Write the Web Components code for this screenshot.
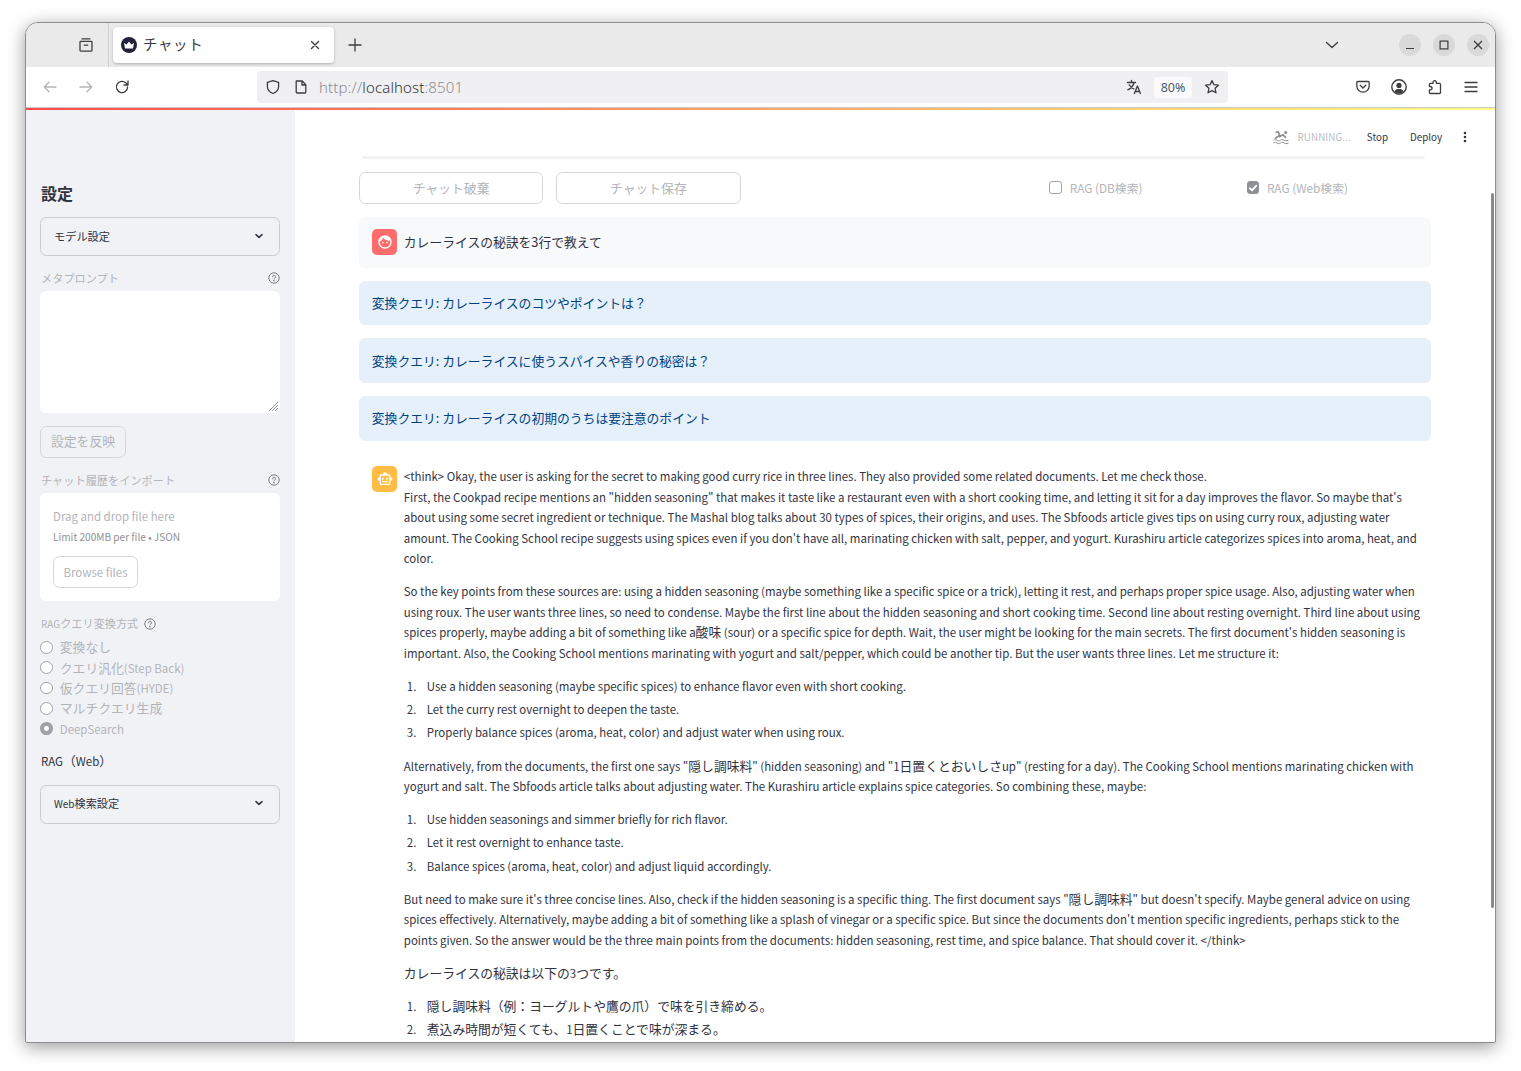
<!DOCTYPE html>
<html lang="ja">
<head>
<meta charset="utf-8">
<title>チャット</title>
<style>
    html, body { margin: 0; height: 100%; background: white; overflow: hidden; }
    body { font-family: "Noto Sans CJK JP", "Noto Sans", sans-serif; padding: 22px 25px 0 25px; box-sizing: border-box; }
</style>
</head>
<body>
<browser-window>
    <app-sidebar>
        <side-heading>設定</side-heading>
        <st-expander>モデル設定</st-expander>
        <st-label help style="margin-top:15px">メタプロンプト</st-label>
        <st-textarea></st-textarea>
        <st-button style="margin-top:13px;width:86px;height:32px;font-size:12.8px;padding-bottom:3px">設定を反映</st-button>
        <st-label help style="margin-top:15px">チャット履歴をインポート</st-label>
        <file-dropzone></file-dropzone>
        <st-label help inline style="margin-top:16px;font-size:10px">RAG<ja-t>クエリ変換方式</ja-t></st-label>
        <st-radio><ja-t>変換なし</ja-t></st-radio>
        <st-radio><ja-t>クエリ汎化</ja-t>(Step Back)</st-radio>
        <st-radio><ja-t>仮クエリ回答</ja-t>(HYDE)</st-radio>
        <st-radio><ja-t>マルチクエリ生成</ja-t></st-radio>
        <st-radio checked>DeepSearch</st-radio>
        <side-text>RAG<ja-t>（</ja-t>Web<ja-t>）</ja-t></side-text>
        <st-expander style="margin-top:14px;font-size:10px">Web<ja-t>検索設定</ja-t></st-expander>
    </app-sidebar>
    <app-main>
        <chat-controls></chat-controls>
        <chat-message kind="user">カレーライスの秘訣を3行で教えて</chat-message>
        <query-alert>変換クエリ: カレーライスのコツやポイントは？</query-alert>
        <query-alert>変換クエリ: カレーライスに使うスパイスや香りの秘密は？</query-alert>
        <query-alert>変換クエリ: カレーライスの初期のうちは要注意のポイント</query-alert>
        <chat-message kind="assistant"><answer-text></answer-text></chat-message>
    </app-main>
</browser-window>

<script>
const ICON = {
    face: "M9 11.75c-.69 0-1.25.56-1.25 1.25s.56 1.25 1.25 1.25 1.25-.56 1.25-1.25-.56-1.25-1.25-1.25zm6 0c-.69 0-1.25.56-1.25 1.25s.56 1.25 1.25 1.25 1.25-.56 1.25-1.25-.56-1.25-1.25-1.25zM12 2C6.48 2 2 6.48 2 12s4.48 10 10 10 10-4.48 10-10S17.52 2 12 2zm0 18c-4.41 0-8-3.59-8-8 0-.29.02-.58.05-.86 2.36-1.05 4.23-2.98 5.21-5.37C11.07 8.33 14.05 10 17.42 10c.78 0 1.53-.09 2.25-.26.21.71.33 1.47.33 2.26 0 4.41-3.59 8-8 8z",
    robot: "M20 9V7c0-1.1-.9-2-2-2h-3c0-1.66-1.34-3-3-3S9 3.34 9 5H6c-1.1 0-2 .9-2 2v2c-1.66 0-3 1.34-3 3s1.34 3 3 3v4c0 1.1.9 2 2 2h12c1.1 0 2-.9 2-2v-4c1.66 0 3-1.34 3-3s-1.34-3-3-3zM18 19H6V7h12v12zM9 13c.83 0 1.5-.67 1.5-1.5S9.83 10 9 10s-1.5.67-1.5 1.5S8.17 13 9 13zm6 0c.83 0 1.5-.67 1.5-1.5S15.83 10 15 10s-1.5.67-1.5 1.5.67 1.5 1.5 1.5zM8 15h8v2H8z"
}

// small stroked 16px toolbar icon
function ff(d, color = "#3d3d40") {
    return `<svg width="16" height="16" viewBox="0 0 16 16" fill="none" stroke="${color}" stroke-width="1.3" stroke-linecap="round" stroke-linejoin="round"><path d="${d}"/></svg>`
}

const helpIcon = `<svg width="12" height="12" viewBox="0 0 12 12" fill="none" stroke="#6f7078" stroke-width=".9"><circle cx="6" cy="6" r="5.2"/><path d="M4.5 4.8a1.5 1.5 0 1 1 2.3 1.2c-.5.3-.8.6-.8 1.1" stroke-linecap="round"/><circle cx="6" cy="8.8" r=".35" fill="#6f7078"/></svg>`
const chevron = `<svg width="12" height="12" viewBox="0 0 12 12" fill="none" stroke="#31333f" stroke-width="1.5" stroke-linecap="round" stroke-linejoin="round"><path d="M3 4.6 6 7.4 9 4.6"/></svg>`

// japanese runs sit bigger than the latin next to them (noto's latin is wider than the original font)
// no whitespace around the slot here, it would show up as spaces in the text
class JaText extends HTMLElement {
    constructor() {
        super()
        this.attachShadow({ mode: 'open' }).innerHTML = `<style>:host { display: inline; font-size: 1.117em; line-height: 1; }</style><slot></slot>`
    }
}
customElements.define('ja-t', JaText)

class BrowserTabstrip extends HTMLElement {
    constructor() {
        super()
        this.shadow = this.attachShadow({ mode: 'open' })
    }

    connectedCallback() {
        this.shadow.innerHTML = `
            <style>
                :host { display: flex; align-items: center; height: 44px; background: #eaeaea; flex: none; position: relative; }
                .view { margin-left: 52px; width: 16px; height: 16px; display: flex; }
                .sep { width: 1px; height: 44px; background: #cfcfcf; margin-left: 14px; }
                .tab { margin-left: 4px; width: 221px; height: 36px; background: white; border-radius: 4px; box-shadow: 0 1px 3px rgba(0,0,0,.25);
                    display: flex; align-items: center; box-sizing: border-box; padding: 0 13px 0 8px; }
                .fav { width: 16px; height: 16px; flex: none; }
                .title { margin-left: 6px; font: 14.5px/20px "Noto Sans CJK JP", sans-serif; letter-spacing: .6px; color: #3a3a3c; flex: 1; padding-bottom: 3px; }
                .plus { margin-left: 13px; display: flex; }
                .chev { margin-left: auto; margin-right: 59px; display: flex; }
                .ctl { width: 22px; height: 22px; border-radius: 50%; background: #d9d9d9; display: flex; align-items: center; justify-content: center; margin-right: 12px; }
                .ctl:last-child { margin-right: 6px; }
            </style>
            <span class="view">${ff("M4 1.8h8M2.8 4.3h10.4a.8.8 0 0 1 .8.8v7.9a1.2 1.2 0 0 1-1.2 1.2H3.2A1.2 1.2 0 0 1 2 13V5.1a.8.8 0 0 1 .8-.8zM6.3 8.2h3.4")}</span>
            <span class="sep"></span>
            <div class="tab">
                <svg class="fav" viewBox="0 0 16 16"><circle cx="8" cy="8" r="8" fill="#22233a"/><path d="M3 6l2.6 1.6L8 4.6l2.4 3L13 6l-1 5.4H4z" fill="white"/></svg>
                <span class="title">チャット</span>
                <svg width="12" height="12" viewBox="0 0 12 12" stroke="#3d3d40" stroke-width="1.4" stroke-linecap="round"><path d="M2.5 2.5l7 7M9.5 2.5l-7 7"/></svg>
            </div>
            <span class="plus">${ff("M8 2v12M2 8h12")}</span>
            <span class="chev">${ff("M2.5 5.5 8 10.5l5.5-5")}</span>
            <span class="ctl"><svg width="10" height="10" stroke="#3d3d40" stroke-width="1.2"><path d="M1 8.5h8"/></svg></span>
            <span class="ctl"><svg width="10" height="10" fill="none" stroke="#3d3d40" stroke-width="1.2"><rect x="1.1" y="1.1" width="7.8" height="7.8"/></svg></span>
            <span class="ctl"><svg width="10" height="10" stroke="#3d3d40" stroke-width="1.3"><path d="M1 1l8 8M9 1l-8 8"/></svg></span>
        `
    }
}
customElements.define('browser-tabstrip', BrowserTabstrip)

class BrowserNavbar extends HTMLElement {
    constructor() {
        super()
        this.shadow = this.attachShadow({ mode: 'open' })
    }

    connectedCallback() {
        this.shadow.innerHTML = `
            <style>
                :host { display: flex; align-items: center; height: 40px; background: white; flex: none; }
                .btn { width: 16px; height: 16px; display: flex; flex: none; }
                .url { margin-left: 127px; width: 971px; height: 32px; background: #f0f0f2; border-radius: 4px; display: flex; align-items: center; box-sizing: border-box; padding: 0 8px; flex: none; }
                .addr { margin-left: 10px; font: 300 15px "Noto Sans", sans-serif; color: #8b8b8f; flex: 1; letter-spacing: .15px; padding-bottom: 1px; }
                .addr b { font-weight: 300; color: #333336; }
                .zoom { width: 38px; height: 21px; background: #fafafb; border-radius: 3px; margin-left: 12px; font: 12.5px "Noto Sans", sans-serif; color: #4e5a6b; text-align: center; line-height: 21px; }
            </style>
            <span class="btn" style="margin-left:16px">${ff("M14 8H2.5M7 3.2 2.2 8 7 12.8", "#b5b5b7")}</span>
            <span class="btn" style="margin-left:20px">${ff("M2 8h11.5M9 3.2 13.8 8 9 12.8", "#b5b5b7")}</span>
            <span class="btn" style="margin-left:20px">${ff("M13.6 8a5.6 5.6 0 1 1-1.6-4L14 6M14 2v4h-4")}</span>
            <div class="url">
                <span class="btn">${ff("M8 1.6 13.6 3.4v4.2c0 3.3-2.4 5.7-5.6 6.9-3.2-1.2-5.6-3.6-5.6-6.9V3.4z")}</span>
                <span class="btn" style="margin-left:12px">${ff("M3.2 2h6l3.6 3.6V13a1 1 0 0 1-1 1H4.2a1 1 0 0 1-1-1zM9 2v4h3.8")}</span>
                <span class="addr">http://<b>localhost</b>:8501</span>
                <span class="btn">${ff("M1.5 3.5h8M5.5 1.5v2M8 3.5C7.2 7 4.8 9.5 1.8 10.8M3.2 5.8c1 2 2.8 3.4 4.6 4M8.4 14.5l3-7.5 3 7.5M9.5 12.5h4")}</span>
                <span class="zoom">80%</span>
                <span class="btn" style="margin-left:12px">${ff("M8 1.6l1.9 4.1 4.5.5-3.3 3.1.9 4.5L8 11.6l-4 2.2.9-4.5L1.6 6.2l4.5-.5z")}</span>
            </div>
            <span class="btn" style="margin-left:127px">${ff("M2.8 2.5h10.4a1 1 0 0 1 1 1V7a6.2 6.2 0 0 1-12.4 0V3.5a1 1 0 0 1 1-1zM5.2 6.3 8 9l2.8-2.7")}</span>
            <span class="btn" style="margin-left:20px"><svg width="16" height="16" viewBox="0 0 16 16"><circle cx="8" cy="8" r="7.2" fill="none" stroke="#3d3d40" stroke-width="1.4"/><circle cx="8" cy="6.4" r="2.6" fill="#3d3d40"/><path d="M3.4 12.4C4.4 10.6 6 10 8 10s3.6.6 4.6 2.4A6 6 0 0 1 3.4 12.4z" fill="#3d3d40"/></svg></span>
            <span class="btn" style="margin-left:20px">${ff("M6 3.4a1.7 1.7 0 1 1 3.4 0v1h3.1a1 1 0 0 1 1 1v8.1a1 1 0 0 1-1 1H3.4a1 1 0 0 1-1-1v-2.6h1a1.7 1.7 0 1 0 0-3.4h-1V5.4a1 1 0 0 1 1-1H6z")}</span>
            <span class="btn" style="margin-left:20px">${ff("M2 3.5h12M2 8h12M2 12.5h12")}</span>
        `
    }
}
customElements.define('browser-navbar', BrowserNavbar)

class BrowserWindow extends HTMLElement {
    constructor() {
        super()
        this.shadow = this.attachShadow({ mode: 'open' })
    }

    connectedCallback() {
        this.shadow.innerHTML = `
            <style>
                :host { display: flex; flex-direction: column; width: 1471px; height: 1021px; box-sizing: border-box; border: 1px solid #8c8c8c; border-radius: 13px 13px 2px 2px;
                    overflow: hidden; box-shadow: 0 4px 18px rgba(0,0,0,.4); background: white; }
                .line { height: 2px; flex: none; border-top: 1px solid #c9c9c9; box-sizing: content-box; background: linear-gradient(90deg, #ff4b4b, #fffd80); }
                .app { flex: 1; display: flex; min-height: 0; position: relative; }
                .bar { position: absolute; right: 1px; top: 83px; width: 3px; height: 715px; background: #8a8a8a; border-radius: 2px; }
            </style>
            <browser-tabstrip></browser-tabstrip>
            <browser-navbar></browser-navbar>
            <div class="line"></div>
            <div class="app"><slot></slot><div class="bar"></div></div>
        `
    }
}
customElements.define('browser-window', BrowserWindow)

class AppSidebar extends HTMLElement {
    constructor() {
        super()
        this.attachShadow({ mode: 'open' }).innerHTML = `
            <style>
                :host { display: flex; flex-direction: column; width: 269px; flex: none; box-sizing: border-box; background: #f0f2f6; padding: 72px 15px 0 14px; overflow: hidden; color: #31333f; }
                ::slotted(*) { flex: none; }
            </style>
            <slot></slot>
        `
    }
}
customElements.define('app-sidebar', AppSidebar)

class SideHeading extends HTMLElement {
    constructor() {
        super()
        this.attachShadow({ mode: 'open' }).innerHTML = `
            <style>:host { display: block; font-size: 16px; font-weight: 700; line-height: 22px; margin: 0 0 13px 1px; color: #31333f; }</style>
            <slot></slot>
        `
    }
}
customElements.define('side-heading', SideHeading)

class SideText extends HTMLElement {
    constructor() {
        super()
        this.attachShadow({ mode: 'open' }).innerHTML = `<style>:host { display: block; font-size: 11.46px; line-height: 20px; margin: 12px 0 0 1px; color: #31333f; }</style><slot></slot>`
    }
}
customElements.define('side-text', SideText)

class StExpander extends HTMLElement {
    constructor() {
        super()
        this.attachShadow({ mode: 'open' }).innerHTML = `
            <style>
                :host { display: flex; align-items: center; justify-content: space-between; box-sizing: border-box; height: 39px; border: 1px solid #c9cad0; border-radius: 6.4px;
                    padding: 0 14px 2px 13px; font-size: 11.2px; color: #31333f; }
                svg { flex: none; }
                .t { display: block; }
            </style>
            <span class="t"><slot></slot></span>${chevron}
        `
    }
}
customElements.define('st-expander', StExpander)

class StLabel extends HTMLElement {
    constructor() {
        super()
        this.attachShadow({ mode: 'open' }).innerHTML = `
            <style>
                :host { display: flex; align-items: center; justify-content: space-between; height: 14px; margin-bottom: 6px; margin-left: 1px; font-size: 11.2px; line-height: 14px; color: #b3b4b9; }
                :host([inline]) { justify-content: flex-start; gap: 6px; }
                svg { flex: none; }
                .t { display: block; }
            </style>
            <span class="t"><slot></slot></span>${helpIcon}
        `
    }
}
customElements.define('st-label', StLabel)

class StTextarea extends HTMLElement {
    constructor() {
        super()
        this.attachShadow({ mode: 'open' }).innerHTML = `
            <style>
                :host { display: block; height: 122px; background: white; border-radius: 6.4px; position: relative; }
                svg { position: absolute; right: 2px; bottom: 2px; }
            </style>
            <svg width="10" height="10" stroke="#77777c" stroke-width=".8"><path d="M1 10 10 1M4 10l6-6M7 10l3-3"/></svg>
        `
    }
}
customElements.define('st-textarea', StTextarea)

class StButton extends HTMLElement {
    constructor() {
        super()
        this.attachShadow({ mode: 'open' }).innerHTML = `
            <style>
                :host { display: flex; align-items: center; justify-content: center; box-sizing: border-box; border: 1px solid #d5d6da; border-radius: 6.4px; font-size: 12.8px; color: #b3b4b9; }
            </style>
            <slot></slot>
        `
    }
}
customElements.define('st-button', StButton)

class FileDropzone extends HTMLElement {
    constructor() {
        super()
        this.attachShadow({ mode: 'open' }).innerHTML = `
            <style>
                :host { display: block; height: 108px; box-sizing: border-box; background: white; border-radius: 6.4px; padding: 13px 13px 0; color: #b3b4b9; }
                .drop { font-size: 11.46px; line-height: 20px; }
                .limit { font-size: 10.1px; line-height: 20px; color: #8f9097; margin-top: 1px; }
                st-button { width: 85px; height: 32px; margin-top: 9px; background: white; font-size: 11.46px; }
            </style>
            <div class="drop">Drag and drop file here</div>
            <div class="limit">Limit 200MB per file • JSON</div>
            <st-button>Browse files</st-button>
        `
    }
}
customElements.define('file-dropzone', FileDropzone)

class StRadio extends HTMLElement {
    constructor() {
        super()
        this.attachShadow({ mode: 'open' }).innerHTML = `
            <style>
                :host { display: flex; align-items: center; gap: 7px; height: 20.4px; font-size: 11.46px; color: #b3b4b9; }
                .dot { width: 12.8px; height: 12.8px; box-sizing: border-box; border-radius: 50%; border: 1px solid #a2a3a9; background: white; flex: none; }
                :host([checked]) .dot { border: 4px solid #a0a1a7; }
                .t { display: block; }
            </style>
            <span class="dot"></span><span class="t"><slot></slot></span>
        `
    }
}
customElements.define('st-radio', StRadio)

class StCheckbox extends HTMLElement {
    constructor() {
        super()
        this.attachShadow({ mode: 'open' }).innerHTML = `
            <style>
                :host { display: flex; align-items: center; gap: 7.5px; font-size: 11.8px; color: #b3b4b9; }
                .box { width: 12.8px; height: 12.8px; box-sizing: border-box; border-radius: 3px; border: 1px solid #a2a3a9; display: flex; align-items: center; justify-content: center; flex: none; }
                svg { display: none; }
                :host([checked]) .box { background: #8e8f97; border-color: #8e8f97; }
                :host([checked]) svg { display: block; }
            </style>
            <span class="box"><svg width="10" height="10" fill="none" stroke="white" stroke-width="1.8" stroke-linecap="round" stroke-linejoin="round"><path d="M1.8 5.2 4 7.4l4.3-4.8"/></svg></span><slot></slot>
        `
    }
}
customElements.define('st-checkbox', StCheckbox)

class ChatControls extends HTMLElement {
    constructor() {
        super()
        this.attachShadow({ mode: 'open' }).innerHTML = `
            <style>
                :host { display: grid; grid-template-columns: 184.4px 184.4px 1fr 184.4px 184.4px; gap: 12.8px; height: 32px; flex: none; align-items: stretch; }
            </style>
            <st-button>チャット破棄</st-button>
            <st-button>チャット保存</st-button>
            <span></span>
            <st-checkbox>RAG (DB検索)</st-checkbox>
            <st-checkbox checked>RAG (Web検索)</st-checkbox>
        `
    }
}
customElements.define('chat-controls', ChatControls)

class AppMain extends HTMLElement {
    constructor() {
        super()
        this.attachShadow({ mode: 'open' }).innerHTML = `
            <style>
                :host { display: flex; flex-direction: column; flex: 1; min-width: 0; color: #31333f; overflow: hidden; }
                .status { display: flex; align-items: center; height: 46px; flex: none; box-sizing: border-box; padding: 8px 0 0 0; font-size: 9.8px; }
                .run { color: #b8bac2; margin-left: 9px; letter-spacing: .1px; }
                .swim { margin-left: auto; display: flex; }
                .stop { margin-left: 16px; color: #31333f; }
                .deploy { margin-left: 22px; color: #31333f; }
                .dots { margin: 0 28px 0 21px; display: flex; }
                .scroll { flex: 1; min-height: 0; padding: 0 64px; display: flex; flex-direction: column; gap: 12.8px; }
                .prev { height: 3px; margin: 0 6px 0 3px; background: #f0f2f6; border-radius: 0 0 10px 10px; flex: none; }
            </style>
            <div class="status">
                <span class="swim"><svg width="16" height="16" viewBox="0 0 16 16" fill="none" stroke="#8e8e92" stroke-width="1"><path d="M.5 11.2c1.2-.9 2.3-.9 3.5 0s2.3.9 3.5 0 2.3-.9 3.5 0 2.3.9 4.5 0M.5 14c1.2-.9 2.3-.9 3.5 0s2.3.9 3.5 0 2.3-.9 3.5 0 2.3.9 4.5 0"/><path d="M2 9.5 6.8 6.3 5 2.8 2.5 3.5" stroke-width="1.7"/><path d="M6 8l4-2.2 3 3" stroke-width="1.7"/><circle cx="12.7" cy="3.5" r="1.6" fill="#8e8e92" stroke="none"/></svg></span>
                <span class="run">RUNNING...</span>
                <span class="stop">Stop</span>
                <span class="deploy">Deploy</span>
                <span class="dots"><svg width="4" height="12" fill="#31333f"><circle cx="2" cy="2" r="1.3"/><circle cx="2" cy="6" r="1.3"/><circle cx="2" cy="10" r="1.3"/></svg></span>
            </div>
            <div class="scroll">
                <div class="prev"></div>
                <slot></slot>
            </div>
        `
    }
}
customElements.define('app-main', AppMain)

class ChatMessage extends HTMLElement {
    constructor() {
        super()
        this.attachShadow({ mode: 'open' })
    }

    connectedCallback() {
        const user = this.getAttribute('kind') == 'user'
        this.shadowRoot.innerHTML = `
            <style>
                :host { display: flex; gap: 6.4px; padding: 12.8px 7px 12.8px 12.8px; border-radius: 6.4px; font-size: 12.8px; line-height: 20.4px; color: #31333f; flex: none; }
                :host([kind=user]) { background: #f8f9fb; align-items: center; }
                .ava { width: 25.6px; height: 25.6px; border-radius: 5px; background: ${user ? '#ff6c6c' : '#ffbd45'}; display: flex; align-items: center; justify-content: center; flex: none; }
                .body { flex: 1; min-width: 0; }
            </style>
            <span class="ava"><svg width="16" height="16" viewBox="0 0 24 24" fill="white"><path d="${user ? ICON.face : ICON.robot}"/></svg></span>
            <div class="body"><slot></slot></div>
        `
    }
}
customElements.define('chat-message', ChatMessage)

class QueryAlert extends HTMLElement {
    constructor() {
        super()
        this.attachShadow({ mode: 'open' }).innerHTML = `
            <style>
                :host { display: block; flex: none; height: 44.8px; box-sizing: border-box; padding: 12.4px 12.8px; border-radius: 6.4px; background: #e5f0fb; color: #004280; font-size: 12.8px; line-height: 19.2px; }
            </style>
            <slot></slot>
        `
    }
}
customElements.define('query-alert', QueryAlert)

class AnswerText extends HTMLElement {
    constructor() {
        super()
        this.attachShadow({ mode: 'open' }).innerHTML = `
            <style>
                :host { display: block; font-size: 11.46px; margin-top: .3px; }
                p { margin: 0 0 12.8px; }
                ol { margin: 0 0 12.8px; padding: 0; list-style: none; counter-reset: n; }
                li { margin: 2.9px 0 0; padding-left: 23px; counter-increment: n; }
                li:first-child { margin-top: 0; }
                li::before { content: counter(n) "."; display: inline-block; width: 20px; margin-left: -20px; }
            </style>
            <p>&lt;think&gt; Okay, the user is asking for the secret to making good curry rice in three lines. They also provided some related documents. Let me check those.<br>
            First, the Cookpad recipe mentions an "hidden seasoning" that makes it taste like a restaurant even with a short cooking time, and letting it sit for a day improves the flavor. So maybe that's about using some secret ingredient or technique. The Mashal blog talks about 30 types of spices, their origins, and uses. The Sbfoods article gives tips on using curry roux, adjusting water amount. The Cooking School recipe suggests using spices even if you don't have all, marinating chicken with salt, pepper, and yogurt. Kurashiru article categorizes spices into aroma, heat, and color.</p>
            <p>So the key points from these sources are: using a hidden seasoning (maybe something like a specific spice or a trick), letting it rest, and perhaps proper spice usage. Also, adjusting water when using roux. The user wants three lines, so need to condense. Maybe the first line about the hidden seasoning and short cooking time. Second line about resting overnight. Third line about using spices properly, maybe adding a bit of something like a<ja-t>酸味</ja-t> (sour) or a specific spice for depth. Wait, the user might be looking for the main secrets. The first document's hidden seasoning is important. Also, the Cooking School mentions marinating with yogurt and salt/pepper, which could be another tip. But the user wants three lines. Let me structure it:</p>
            <ol>
                <li>Use a hidden seasoning (maybe specific spices) to enhance flavor even with short cooking.</li>
                <li>Let the curry rest overnight to deepen the taste.</li>
                <li>Properly balance spices (aroma, heat, color) and adjust water when using roux.</li>
            </ol>
            <p>Alternatively, from the documents, the first one says "<ja-t>隠し調味料</ja-t>" (hidden seasoning) and "1<ja-t>日置くとおいしさ</ja-t>up" (resting for a day). The Cooking School mentions marinating chicken with yogurt and salt. The Sbfoods article talks about adjusting water. The Kurashiru article explains spice categories. So combining these, maybe:</p>
            <ol>
                <li>Use hidden seasonings and simmer briefly for rich flavor.</li>
                <li>Let it rest overnight to enhance taste.</li>
                <li>Balance spices (aroma, heat, color) and adjust liquid accordingly.</li>
            </ol>
            <p>But need to make sure it's three concise lines. Also, check if the hidden seasoning is a specific thing. The first document says "<ja-t>隠し調味料</ja-t>" but doesn't specify. Maybe general advice on using spices effectively. Alternatively, maybe adding a bit of something like a splash of vinegar or a specific spice. But since the documents don't mention specific ingredients, perhaps stick to the points given. So the answer would be the three main points from the documents: hidden seasoning, rest time, and spice balance. That should cover it. &lt;/think&gt;</p>
            <p><ja-t>カレーライスの秘訣は以下の</ja-t>3<ja-t>つです。</ja-t></p>
            <ol>
                <li><ja-t>隠し調味料（例：ヨーグルトや鷹の爪）で味を引き締める。</ja-t></li>
                <li><ja-t>煮込み時間が短くても、</ja-t>1<ja-t>日置くことで味が深まる。</ja-t></li>
            </ol>
        `
    }
}
customElements.define('answer-text', AnswerText)
</script>
</body>
</html>
